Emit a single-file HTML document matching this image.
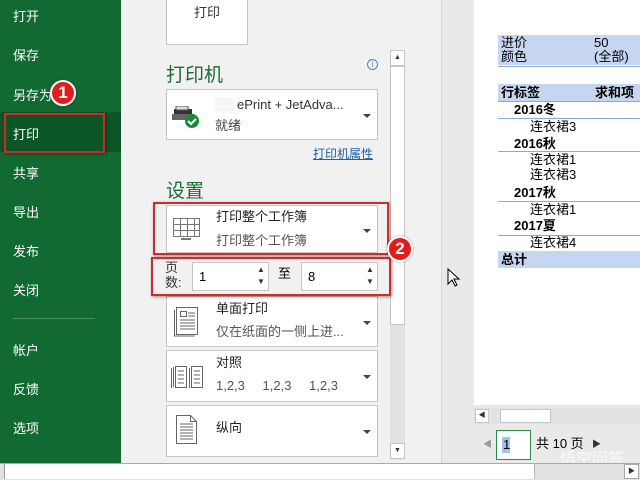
<!DOCTYPE html>
<html><head><meta charset="utf-8"><style>
*{margin:0;padding:0;box-sizing:border-box}
body{width:640px;height:480px;overflow:hidden;position:relative;background:#e9e9e9;font-family:"Liberation Sans","Microsoft YaHei","Noto Sans CJK SC",sans-serif;font-size:13px;color:#333}
.a{position:absolute}
.nav{left:0;top:0;width:121px;height:463px;background:#116a32}
.nav div{position:absolute;left:13px;color:#fff;font-size:13px}
.mid{left:121px;top:0;width:320px;height:463px;background:#f1f1f1}
.box{position:absolute;background:#fff;border:1px solid #c6c6c6}
.h{position:absolute;color:#1d6b36;font-size:19px}
.dd{position:absolute;width:0;height:0;border-left:4px solid transparent;border-right:4px solid transparent;border-top:4px solid #444}
.red{position:absolute;border:2px solid #d12a2a;box-shadow:1px 1px 3px rgba(0,0,0,.4);z-index:5}
.badge{position:absolute;width:26px;height:26px;border-radius:50%;background:#e21b1b;border:2px solid #fff;color:#fff;font-weight:bold;font-size:17px;text-align:center;line-height:22px;box-shadow:0 0 2px rgba(0,0,0,.4);z-index:10}
.t{position:absolute;font-size:13px;color:#000;line-height:16px}
.b{font-weight:bold}
.blue{position:absolute;left:498px;width:142px;background:#c7d6f0}
.ln{position:absolute;left:498px;width:142px;height:1px;background:#8ea9db}
</style></head><body>
<div class="a nav">
<div style="top:6px">打开</div>
<div style="top:45px">保存</div>
<div style="top:85px">另存为</div>
<div style="top:112px;left:0;width:121px;height:40px;background:#0c5527"></div>
<div style="top:124px">打印</div>
<div style="top:163px">共享</div>
<div style="top:202px">导出</div>
<div style="top:241px">发布</div>
<div style="top:280px">关闭</div>
<div style="top:318px;width:82px;height:1px;background:#4b8f63"></div>
<div style="top:340px">帐户</div>
<div style="top:379px">反馈</div>
<div style="top:418px">选项</div>
</div>
<div class="red" style="left:4px;top:113px;width:101px;height:40px"></div>
<div class="badge" style="left:50px;top:80px">1</div>

<div class="a mid"></div>
<div class="box" style="left:166px;top:-2px;width:82px;height:47px"><span class="t" style="left:27px;top:6px;color:#333">打印</span></div>
<div class="h" style="left:166px;top:60px">打印机</div>
<div class="a" style="left:367px;top:59px;width:11px;height:11px;border:1px solid #4a86c8;border-radius:50%;font-size:8px;color:#4a86c8;text-align:center;line-height:9px">i</div>
<div class="box" style="left:166px;top:89px;width:212px;height:51px">
 <svg class="a" style="left:5px;top:16px" width="30" height="22"><rect x="2" y="3" width="18" height="8" fill="#333"/><rect x="0" y="8" width="22" height="6" fill="#666"/><rect x="4" y="0" width="12" height="4" fill="#ddd" stroke="#555"/><circle cx="20" cy="15" r="7" fill="#1a8a3a"/><path d="M16 15l3 3 5-5" stroke="#fff" stroke-width="2" fill="none"/></svg>
 <span class="t" style="left:48px;top:7px;color:#333"><span style="color:#ddd">▒▒</span> ePrint + JetAdva...</span>
 <span class="t" style="left:48px;top:28px;color:#444">就绪</span>
 <div class="dd" style="left:196px;top:24px"></div>
</div>
<div class="t" style="left:313px;top:146px;color:#1d5fa8;text-decoration:underline;font-size:12px">打印机属性</div>
<div class="h" style="left:166px;top:176px">设置</div>
<div class="box" style="left:166px;top:205px;width:212px;height:48px">
 <svg class="a" style="left:6px;top:12px" width="28" height="24"><g stroke="#777" fill="none"><rect x="0.5" y="0.5" width="26" height="18"/><path d="M0 6.5h27M0 12.5h27M7.5 0v19M14.5 0v19M21.5 0v19"/><path d="M8 21h10" stroke-width="2"/></g></svg>
 <span class="t" style="left:49px;top:3px;color:#222">打印整个工作簿</span>
 <span class="t" style="left:49px;top:27px;color:#555">打印整个工作簿</span>
 <div class="dd" style="left:196px;top:23px"></div>
</div>
<div class="red" style="left:153px;top:202px;width:236px;height:53px"></div>
<div class="t" style="left:165px;top:260px;line-height:15px;color:#333">页<br>数:</div>
<div class="box" style="left:192px;top:262px;width:77px;height:29px"><span class="t" style="left:6px;top:6px">1</span><span class="a" style="left:64px;top:2px;font-size:8px">▲</span><span class="a" style="left:64px;top:14px;font-size:8px">▼</span></div>
<div class="t" style="left:278px;top:266px">至</div>
<div class="box" style="left:301px;top:262px;width:77px;height:29px"><span class="t" style="left:6px;top:6px">8</span><span class="a" style="left:64px;top:2px;font-size:8px">▲</span><span class="a" style="left:64px;top:14px;font-size:8px">▼</span></div>
<div class="red" style="left:151px;top:257px;width:240px;height:39px"></div>
<div class="badge" style="left:387px;top:236px">2</div>

<div class="box" style="left:166px;top:296px;width:212px;height:51px">
 <svg class="a" style="left:7px;top:10px" width="26" height="30"><g stroke="#666" fill="none"><rect x="2.5" y="0.5" width="21" height="27"/><path d="M0.5 3v26h20"/><rect x="6.5" y="4.5" width="6" height="5"/><path d="M14 6h7M14 9h7M6 13h15M6 16h15M6 19h15M6 22h15"/></g></svg>
 <span class="t" style="left:49px;top:4px;color:#222">单面打印</span>
 <span class="t" style="left:49px;top:27px;color:#555">仅在纸面的一侧上进...</span>
 <div class="dd" style="left:196px;top:24px"></div>
</div>
<div class="box" style="left:166px;top:350px;width:212px;height:52px">
 <svg class="a" style="left:4px;top:15px" width="34" height="24"><g stroke="#666" fill="none"><path d="M0.5 2v20M2.5 1v20"/><rect x="4.5" y="0.5" width="11" height="21"/><path d="M7 5h6M7 9h6M7 13h6M7 17h6"/><path d="M18.5 2v20"/><rect x="20.5" y="0.5" width="11" height="21"/><path d="M23 5h6M23 9h6M23 13h6M23 17h6"/></g></svg>
 <span class="t" style="left:49px;top:4px;color:#222">对照</span>
 <span class="t" style="left:49px;top:27px;color:#555;word-spacing:14px">1,2,3 1,2,3 1,2,3</span>
 <div class="dd" style="left:196px;top:24px"></div>
</div>
<div class="box" style="left:166px;top:405px;width:212px;height:52px">
 <svg class="a" style="left:9px;top:9px" width="22" height="30"><g stroke="#666" fill="none"><path d="M0.5 0.5h14l6 6v22h-20z"/><path d="M14.5 0.5v6h6"/><path d="M4 9h13M4 12h13M4 15h13M4 18h13M4 21h13M4 24h13"/></g></svg>
 <span class="t" style="left:49px;top:14px;color:#222">纵向</span>
 <div class="dd" style="left:196px;top:24px"></div>
</div>
<!-- vertical scrollbar -->
<div class="a" style="left:390px;top:50px;width:15px;height:410px;background:#e2e2e2"></div>
<div class="a" style="left:390px;top:50px;width:15px;height:16px;background:#fff;border:1px solid #c6c6c6;font-size:7px;text-align:center;line-height:13px">▲</div>
<div class="a" style="left:390px;top:66px;width:15px;height:259px;background:#fff;border:1px solid #c6c6c6"></div>
<div class="a" style="left:390px;top:443px;width:15px;height:16px;background:#fff;border:1px solid #c6c6c6;font-size:7px;text-align:center;line-height:13px">▼</div>
<div class="a" style="left:441px;top:0;width:1px;height:463px;background:#d6d6d6"></div>
<svg class="a" style="left:447px;top:268px" width="14" height="20"><path d="M1 1v15l4-4 3 6 2-1-3-6h5z" fill="#fff" stroke="#000"/></svg>

<!-- preview page -->
<div class="a" style="left:474px;top:0;width:166px;height:405px;background:#fff"></div>
<div class="blue" style="top:35px;height:30px"></div>
<div class="ln" style="top:66px"></div>
<div class="t" style="left:501px;top:35px">进价</div><div class="t" style="left:594px;top:35px">50</div>
<div class="t" style="left:501px;top:49px">颜色</div><div class="t" style="left:594px;top:49px">(全部)</div>
<div class="blue" style="top:84px;height:17px"></div>
<div class="t b" style="left:501px;top:85px">行标签</div><div class="t b" style="left:595px;top:85px">求和项</div>
<div class="ln" style="top:101px"></div>
<div class="t b" style="left:514px;top:102px">2016冬</div>
<div class="ln" style="top:118px"></div>
<div class="t" style="left:530px;top:119px">连衣裙3</div>
<div class="t b" style="left:514px;top:136px">2016秋</div>
<div class="ln" style="top:151px"></div>
<div class="t" style="left:530px;top:152px">连衣裙1</div>
<div class="t" style="left:530px;top:167px">连衣裙3</div>
<div class="t b" style="left:514px;top:185px">2017秋</div>
<div class="ln" style="top:201px"></div>
<div class="t" style="left:530px;top:202px">连衣裙1</div>
<div class="t b" style="left:514px;top:218px">2017夏</div>
<div class="ln" style="top:235px"></div>
<div class="t" style="left:530px;top:235px">连衣裙4</div>
<div class="blue" style="top:251px;height:17px"></div>
<div class="t b" style="left:501px;top:252px">总计</div>
<!-- h scroll -->
<div class="a" style="left:474px;top:408px;width:166px;height:16px;background:#e2e2e2"></div>
<div class="a" style="left:475px;top:409px;width:14px;height:14px;background:#fff;border:1px solid #c6c6c6;font-size:7px;line-height:12px;text-align:center">◀</div>
<div class="a" style="left:500px;top:409px;width:51px;height:14px;background:#fff;border:1px solid #c6c6c6"></div>
<!-- page nav -->
<div class="a" style="left:483px;top:437px;font-size:9px;color:#999">◀</div>
<div class="a" style="left:496px;top:430px;width:35px;height:30px;background:#fff;border:1px solid #2a8a4a"></div>
<div class="a" style="left:502px;top:437px;width:8px;height:16px;background:#9ec3ee"></div>
<div class="t" style="left:503px;top:437px">1</div>
<div class="t" style="left:536px;top:436px">共 10 页</div>
<div class="a" style="left:592px;top:437px;font-size:9px;color:#333">▶</div>
<div class="t" style="left:560px;top:452px;color:rgba(255,255,255,.8);font-size:16px">悟空问答</div>
<!-- bottom strip -->
<div class="a" style="left:0;top:463px;width:640px;height:17px;background:#e2e2e2;border-top:1px solid #aaa"></div>
<div class="a" style="left:4px;top:464px;width:531px;height:15px;background:#fff;border-left:1px solid #999;border-right:1px solid #bbb"></div>
<div class="a" style="left:624px;top:464px;width:15px;height:15px;background:#fff;border:1px solid #aaa;font-size:7px;line-height:13px;text-align:center">▶</div>
</body></html>
